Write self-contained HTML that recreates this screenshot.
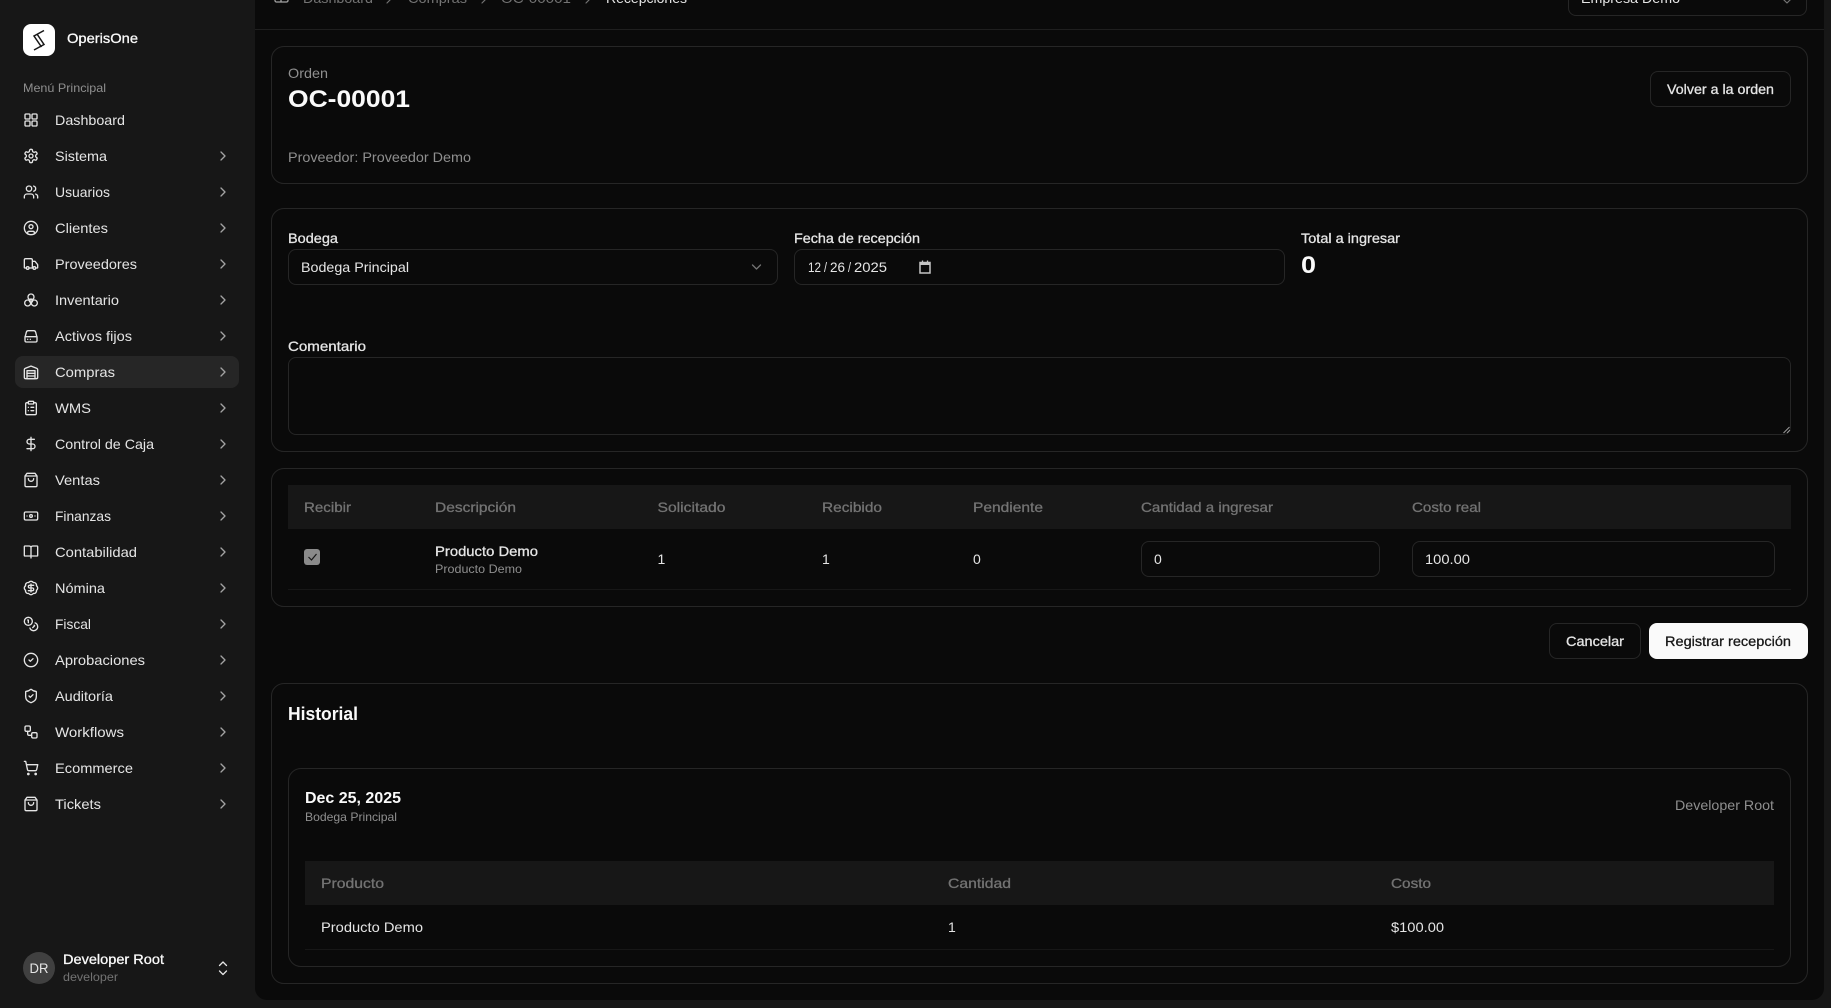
<!DOCTYPE html>
<html lang="es"><head><meta charset="utf-8"><title>OperisOne - Recepciones</title>
<style>
html,body{margin:0;padding:0;width:1831px;height:1008px;overflow:hidden;background:#171717}
.b{position:absolute;box-sizing:border-box}
#main{left:255px;top:-40px;width:1569px;height:1040px;background:#0a0a0a;border-radius:12px}
.card{border:1px solid #262626;border-radius:13px;background:#0a0a0a}
.in{border:1px solid #262626;border-radius:8px;background:#0a0a0a}
.th{background:#171717}
.hr{background:#171717;height:1px}
svg#o{position:absolute;left:0;top:0;font-family:"Liberation Sans",sans-serif;font-size:14px}
svg#o text{fill:#e5e5e5}
svg#o text.m{stroke:currentColor;stroke-width:.3px}
svg#o text.t{font-weight:700}
.i{fill:none;stroke:#e5e5e5;stroke-width:2;stroke-linecap:round;stroke-linejoin:round}
svg#o text.g{fill:#8f8f8f;color:#8f8f8f}
svg#o text.h{fill:#737373;color:#737373}
svg#o text.w{fill:#fafafa;color:#fafafa}
svg#o text.l{fill:#e5e5e5;color:#e5e5e5}
svg#o text.k{fill:#171717;color:#171717}
</style></head><body>
<aside class="b" style="left:0;top:0;width:255px;height:1008px">
<div class="b" style="left:23px;top:24px;width:32px;height:32px;background:#fff;border-radius:8px"></div>
<div class="b" style="left:15px;top:356px;width:224px;height:32px;background:#262626;border-radius:8px"></div>
<div class="b" style="left:23px;top:952px;width:32px;height:32px;background:#404040;border-radius:50%"></div>
</aside>
<main class="b" id="main"></main>
<div class="b" style="left:255px;top:29px;width:1569px;height:1px;background:#1f1f1f"></div>
<div class="b in" style="left:1568px;top:-30px;width:239px;height:46px"></div>
<div class="b card" style="left:271px;top:46px;width:1537px;height:138px"></div>
<div class="b in" style="left:1650px;top:71px;width:141px;height:36px"></div>
<div class="b card" style="left:271px;top:208px;width:1537px;height:244px"></div>
<div class="b in" style="left:288px;top:249px;width:490px;height:36px"></div>
<div class="b in" style="left:794px;top:249px;width:491px;height:36px"></div>
<div class="b in" style="left:288px;top:357px;width:1503px;height:78px"></div>
<div class="b card" style="left:271px;top:468px;width:1537px;height:139px"></div>
<div class="b th" style="left:288px;top:485px;width:1503px;height:44px"></div>
<div class="b hr" style="left:288px;top:589px;width:1503px"></div>
<div class="b" style="left:304px;top:549px;width:16px;height:16px;background:#8a8a8a;border-radius:3px"></div>
<div class="b in" style="left:1141px;top:541px;width:239px;height:36px"></div>
<div class="b in" style="left:1412px;top:541px;width:363px;height:36px"></div>
<div class="b in" style="left:1549px;top:623px;width:92px;height:36px"></div>
<div class="b" style="left:1649px;top:623px;width:159px;height:36px;background:#fafafa;border-radius:8px"></div>
<div class="b card" style="left:271px;top:683px;width:1537px;height:301px"></div>
<div class="b card" style="left:288px;top:768px;width:1503px;height:199px"></div>
<div class="b th" style="left:305px;top:861px;width:1469px;height:44px"></div>
<div class="b hr" style="left:305px;top:949px;width:1469px"></div>

<svg id="o" width="1831" height="1008" viewBox="0 0 1831 1008" xmlns="http://www.w3.org/2000/svg">
<defs><path id="c" d="m9 18 6-6-6-6"/>
<path id="bag" d="M6 2 3 6v14a2 2 0 0 0 2 2h14a2 2 0 0 0 2-2V6l-3-4ZM3 6h18M16 10a4 4 0 0 1-8 0"/></defs>
<!-- logo -->
<path d="M44 30.500 L34 36 L41.500 47 M34 50 L44 44.500 L37 34" fill="none" stroke="#171717" stroke-width="1.500" stroke-linejoin="miter"/>
<text class="w m" x="67" y="43" font-size="14" textLength="71" lengthAdjust="spacingAndGlyphs">OperisOne</text>
<text class="g" x="23" y="92" font-size="12" textLength="83" lengthAdjust="spacingAndGlyphs">Menú Principal</text>
<!-- nav text -->
<text x="55" y="125" textLength="70" lengthAdjust="spacingAndGlyphs">Dashboard</text>
<text x="55" y="161" textLength="52" lengthAdjust="spacingAndGlyphs">Sistema</text>
<text x="55" y="197" textLength="55" lengthAdjust="spacingAndGlyphs">Usuarios</text>
<text x="55" y="233" textLength="53" lengthAdjust="spacingAndGlyphs">Clientes</text>
<text x="55" y="269" textLength="82" lengthAdjust="spacingAndGlyphs">Proveedores</text>
<text x="55" y="305" textLength="64" lengthAdjust="spacingAndGlyphs">Inventario</text>
<text x="55" y="341" textLength="77" lengthAdjust="spacingAndGlyphs">Activos fijos</text>
<text x="55" y="377" textLength="60" lengthAdjust="spacingAndGlyphs">Compras</text>
<text x="55" y="413" textLength="36" lengthAdjust="spacingAndGlyphs">WMS</text>
<text x="55" y="449" textLength="99" lengthAdjust="spacingAndGlyphs">Control de Caja</text>
<text x="55" y="485" textLength="45" lengthAdjust="spacingAndGlyphs">Ventas</text>
<text x="55" y="521" textLength="56" lengthAdjust="spacingAndGlyphs">Finanzas</text>
<text x="55" y="557" textLength="82" lengthAdjust="spacingAndGlyphs">Contabilidad</text>
<text x="55" y="593" textLength="50" lengthAdjust="spacingAndGlyphs">Nómina</text>
<text x="55" y="629" textLength="36" lengthAdjust="spacingAndGlyphs">Fiscal</text>
<text x="55" y="665" textLength="90" lengthAdjust="spacingAndGlyphs">Aprobaciones</text>
<text x="55" y="701" textLength="58" lengthAdjust="spacingAndGlyphs">Auditoría</text>
<text x="55" y="737" textLength="69" lengthAdjust="spacingAndGlyphs">Workflows</text>
<text x="55" y="773" textLength="78" lengthAdjust="spacingAndGlyphs">Ecommerce</text>
<text x="55" y="809" textLength="46" lengthAdjust="spacingAndGlyphs">Tickets</text>
<!-- nav icons -->
<g class="i">
<g transform="translate(23,112) scale(.667)"><rect x="3" y="3" width="7.500" height="7.500" rx="1.500"/><rect x="13.500" y="3" width="7.500" height="7.500" rx="1.500"/><rect x="3" y="13.500" width="7.500" height="7.500" rx="1.500"/><rect x="13.500" y="13.500" width="7.500" height="7.500" rx="1.500"/></g>
<g transform="translate(23,148) scale(.667)"><path d="M12.220 2h-.44a2 2 0 0 0-2 2v.18a2 2 0 0 1-1 1.730l-.43.25a2 2 0 0 1-2 0l-.15-.08a2 2 0 0 0-2.730.73l-.22.38a2 2 0 0 0 .73 2.730l.15.1a2 2 0 0 1 1 1.720v.51a2 2 0 0 1-1 1.740l-.15.09a2 2 0 0 0-.73 2.730l.22.38a2 2 0 0 0 2.730.73l.15-.08a2 2 0 0 1 2 0l.43.25a2 2 0 0 1 1 1.730V20a2 2 0 0 0 2 2h.44a2 2 0 0 0 2-2v-.18a2 2 0 0 1 1-1.730l.43-.25a2 2 0 0 1 2 0l.15.08a2 2 0 0 0 2.730-.73l.22-.39a2 2 0 0 0-.73-2.730l-.15-.08a2 2 0 0 1-1-1.740v-.5a2 2 0 0 1 1-1.740l.15-.09a2 2 0 0 0 .73-2.730l-.22-.38a2 2 0 0 0-2.730-.73l-.15.08a2 2 0 0 1-2 0l-.43-.25a2 2 0 0 1-1-1.730V4a2 2 0 0 0-2-2z"/><circle cx="12" cy="12" r="3"/></g>
<g transform="translate(23,184) scale(.667)"><path d="M16 21v-2a4 4 0 0 0-4-4H6a4 4 0 0 0-4 4v2M22 21v-2a4 4 0 0 0-3-3.870M16 3.130a4 4 0 0 1 0 7.750"/><circle cx="9" cy="7" r="4"/></g>
<g transform="translate(23,220) scale(.667)"><circle cx="12" cy="12" r="10"/><circle cx="12" cy="10" r="3"/><path d="M7 20.662V19a2 2 0 0 1 2-2h6a2 2 0 0 1 2 2v1.662"/></g>
<g transform="translate(23,256) scale(.667)"><path d="M14 18V6a2 2 0 0 0-2-2H4a2 2 0 0 0-2 2v11a1 1 0 0 0 1 1h2M15 18H9M19 18h2a1 1 0 0 0 1-1v-3.650a1 1 0 0 0-.22-.624l-3.480-4.350A1 1 0 0 0 17.520 8H14"/><circle cx="17" cy="18" r="2"/><circle cx="7" cy="18" r="2"/></g>
<g transform="translate(23,292) scale(.667)"><circle cx="12" cy="7.500" r="4.500"/><circle cx="7" cy="16.500" r="4.500"/><circle cx="17" cy="16.500" r="4.500"/><circle cx="12" cy="13" r="2.500"/></g>
<g transform="translate(23,328) scale(.667)"><path d="M3 14 5 6.500a3 3 0 0 1 3-2.500h8a3 3 0 0 1 3 2.500l2 7.500v5a2 2 0 0 1-2 2H5a2 2 0 0 1-2-2zM3 13h18M7 17h.01M11 17h.01"/></g>
<g transform="translate(23,364) scale(.667)"><path d="M22 8.350V20a2 2 0 0 1-2 2H4a2 2 0 0 1-2-2V8.350A2 2 0 0 1 3.260 6.500l8-3.200a2 2 0 0 1 1.480 0l8 3.200A2 2 0 0 1 22 8.350ZM6 18h12M6 14h12"/><rect x="6" y="10" width="12" height="12"/></g>
<g transform="translate(23,400) scale(.667)"><rect x="8" y="2" width="8" height="4" rx="1"/><path d="M16 4h2a2 2 0 0 1 2 2v14a2 2 0 0 1-2 2H6a2 2 0 0 1-2-2V6a2 2 0 0 1 2-2h2M12 11h4M12 16h4M8 11h.01M8 16h.01"/></g>
<g transform="translate(23,436) scale(.667)"><path d="M12 2v20M17 5H9.500a3.500 3.500 0 0 0 0 7h5a3.500 3.500 0 0 1 0 7H6"/></g>
<use href="#bag" transform="translate(23,472) scale(.667)"/>
<g transform="translate(23,508) scale(.667)"><rect x="2" y="6" width="20" height="12" rx="2"/><circle cx="12" cy="12" r="2"/><path d="M6 12h.01M18 12h.01"/></g>
<g transform="translate(23,544) scale(.667)"><path d="M12 5v16M3 18a1 1 0 0 1-1-1V4a1 1 0 0 1 1-1h6a3 3 0 0 1 3 2 3 3 0 0 1 3-2h6a1 1 0 0 1 1 1v13a1 1 0 0 1-1 1h-9z"/></g>
<g transform="translate(23,580) scale(.667)"><path d="M3.850 8.620a4 4 0 0 1 4.780-4.770 4 4 0 0 1 6.740 0 4 4 0 0 1 4.780 4.780 4 4 0 0 1 0 6.740 4 4 0 0 1-4.770 4.780 4 4 0 0 1-6.750 0 4 4 0 0 1-4.780-4.770 4 4 0 0 1 0-6.760ZM16 8h-6a2 2 0 1 0 0 4h4a2 2 0 1 1 0 4H8M12 18V6"/></g>
<g transform="translate(23,616) scale(.667)"><circle cx="8" cy="8" r="6"/><path d="M18.090 10.370A6 6 0 1 1 10.340 18M7 6h1v4M16.710 13.880l.7.710-2.820 2.820"/></g>
<g transform="translate(23,652) scale(.667)"><circle cx="12" cy="12" r="10"/><path d="m9 12 2 2 4-4"/></g>
<g transform="translate(23,688) scale(.667)"><path d="M20 13c0 5-3.500 7.500-7.660 8.950a1 1 0 0 1-.67-.01C7.500 20.500 4 18 4 13V6a1 1 0 0 1 1-1c2 0 4.500-1.200 6.240-2.720a1.170 1.170 0 0 1 1.520 0C14.510 3.810 17 5 19 5a1 1 0 0 1 1 1zM9 12l2 2 4-4"/></g>
<g transform="translate(23,724) scale(.667)"><rect x="3" y="3" width="8" height="8" rx="2"/><path d="M7 11v4a2 2 0 0 0 2 2h4"/><rect x="13" y="13" width="8" height="8" rx="2"/></g>
<g transform="translate(23,760) scale(.667)"><circle cx="8" cy="21" r="1"/><circle cx="19" cy="21" r="1"/><path d="M2.050 2.050h2l2.660 12.420a2 2 0 0 0 2 1.580h9.780a2 2 0 0 0 1.950-1.570l1.650-7.430H5.120"/></g>
<use href="#bag" transform="translate(23,796) scale(.667)"/>
</g>
<!-- nav chevrons -->
<g class="i" style="stroke:#a3a3a3">
<use href="#c" transform="translate(215,148) scale(.667)"/><use href="#c" transform="translate(215,184) scale(.667)"/><use href="#c" transform="translate(215,220) scale(.667)"/><use href="#c" transform="translate(215,256) scale(.667)"/><use href="#c" transform="translate(215,292) scale(.667)"/><use href="#c" transform="translate(215,328) scale(.667)"/><use href="#c" transform="translate(215,364) scale(.667)"/><use href="#c" transform="translate(215,400) scale(.667)"/><use href="#c" transform="translate(215,436) scale(.667)"/><use href="#c" transform="translate(215,472) scale(.667)"/><use href="#c" transform="translate(215,508) scale(.667)"/><use href="#c" transform="translate(215,544) scale(.667)"/><use href="#c" transform="translate(215,580) scale(.667)"/><use href="#c" transform="translate(215,616) scale(.667)"/><use href="#c" transform="translate(215,652) scale(.667)"/><use href="#c" transform="translate(215,688) scale(.667)"/><use href="#c" transform="translate(215,724) scale(.667)"/><use href="#c" transform="translate(215,760) scale(.667)"/><use href="#c" transform="translate(215,796) scale(.667)"/>
</g>
<!-- user -->
<text x="29.500" y="973" font-size="14" textLength="19" lengthAdjust="spacingAndGlyphs">DR</text>
<text class="w m" x="63" y="964" font-size="14" textLength="101" lengthAdjust="spacingAndGlyphs">Developer Root</text>
<text class="h" x="63" y="981" font-size="12" textLength="55" lengthAdjust="spacingAndGlyphs">developer</text>
<path class="i" style="stroke-width:1.300" d="M219.500 965.500l3.500-3.500 3.500 3.500M219.500 971l3.500 3.500 3.500-3.500"/>
<!-- breadcrumb -->
<path class="i" style="stroke:#a3a3a3;stroke-width:1.300" d="M275-4v4.500a1.500 1.500 0 0 0 1.500 1.500h10a1.500 1.500 0 0 0 1.500-1.500V-4M281-4v6"/>
<text class="h" x="303" y="3" textLength="70" lengthAdjust="spacingAndGlyphs">Dashboard</text>
<text class="h" x="408" y="3" textLength="59" lengthAdjust="spacingAndGlyphs">Compras</text>
<text class="h" x="501" y="3" textLength="70" lengthAdjust="spacingAndGlyphs">OC-00001</text>
<text class="l" x="606" y="3" textLength="81" lengthAdjust="spacingAndGlyphs">Recepciones</text>
<g class="i" style="stroke:#737373;stroke-width:1.200"><path d="M387 -3l3 3-3 3M482 -3l3 3-3 3M586 -3l3 3-3 3"/></g>
<text class="l" x="1581" y="3" textLength="99" lengthAdjust="spacingAndGlyphs">Empresa Demo</text>
<path class="i" style="stroke:#737373;stroke-width:1.200" d="M1783-1l4 4 4-4"/>
<!-- card 1 -->
<text class="g" x="288" y="78" textLength="40" lengthAdjust="spacingAndGlyphs">Orden</text>
<text class="w t" x="288" y="107" font-size="24" textLength="122" lengthAdjust="spacingAndGlyphs">OC-00001</text>
<text class="g" x="288" y="162" textLength="183" lengthAdjust="spacingAndGlyphs">Proveedor: Proveedor Demo</text>
<text class="l m" x="1667" y="94" textLength="107" lengthAdjust="spacingAndGlyphs">Volver a la orden</text>
<!-- card 2 -->
<text class="l m" x="288" y="243" textLength="50" lengthAdjust="spacingAndGlyphs">Bodega</text>
<text class="l" x="301" y="272" textLength="108" lengthAdjust="spacingAndGlyphs">Bodega Principal</text>
<path class="i" style="stroke:#737373;stroke-width:1.300" d="M752.500 265l4 4 4-4"/>
<text class="l m" x="794" y="243" textLength="126" lengthAdjust="spacingAndGlyphs">Fecha de recepción</text>
<text class="l" x="808" y="272" textLength="13" lengthAdjust="spacingAndGlyphs">12</text>
<text class="l" x="824" y="272" textLength="3" lengthAdjust="spacingAndGlyphs">/</text>
<text class="l" x="830" y="272" textLength="15" lengthAdjust="spacingAndGlyphs">26</text>
<text class="l" x="848" y="272" textLength="3" lengthAdjust="spacingAndGlyphs">/</text>
<text class="l" x="854" y="272" textLength="33" lengthAdjust="spacingAndGlyphs">2025</text>
<g fill="none" stroke="#c4c4c4"><rect x="920" y="262.500" width="10" height="10.500" stroke-width="1.500"/><path d="M919.500 263.500h11" stroke-width="3"/><path d="M922.500 260.500v2M927.500 260.500v2" stroke-width="1.300"/></g>
<text class="l m" x="1301" y="243" textLength="99" lengthAdjust="spacingAndGlyphs">Total a ingresar</text>
<text class="w t" x="1301" y="273" font-size="24" textLength="15" lengthAdjust="spacingAndGlyphs">0</text>
<text class="l m" x="288" y="351" textLength="78" lengthAdjust="spacingAndGlyphs">Comentario</text>
<path d="M1783.500 433l6-6M1787 433l3-3" stroke="#9a9a9a" stroke-width="1" fill="none"/>
<!-- table -->
<text class="h m" x="304" y="512" textLength="47" lengthAdjust="spacingAndGlyphs">Recibir</text>
<text class="h m" x="435" y="512" textLength="81" lengthAdjust="spacingAndGlyphs">Descripción</text>
<text class="h m" x="657.500" y="512" textLength="68" lengthAdjust="spacingAndGlyphs">Solicitado</text>
<text class="h m" x="822" y="512" textLength="60" lengthAdjust="spacingAndGlyphs">Recibido</text>
<text class="h m" x="973" y="512" textLength="70" lengthAdjust="spacingAndGlyphs">Pendiente</text>
<text class="h m" x="1141" y="512" textLength="132" lengthAdjust="spacingAndGlyphs">Cantidad a ingresar</text>
<text class="h m" x="1412" y="512" textLength="69" lengthAdjust="spacingAndGlyphs">Costo real</text>
<path d="M308.500 557l3 3 5-6" fill="none" stroke="#171717" stroke-width="1.200"/>
<text class="l m" x="435" y="556" textLength="103" lengthAdjust="spacingAndGlyphs">Producto Demo</text>
<text class="g" x="435" y="573" font-size="12" textLength="87" lengthAdjust="spacingAndGlyphs">Producto Demo</text>
<text class="l" x="657.500" y="564">1</text>
<text class="l" x="822" y="564">1</text>
<text class="l" x="973" y="564">0</text>
<text class="l" x="1154" y="564">0</text>
<text class="l" x="1425" y="564" textLength="45" lengthAdjust="spacingAndGlyphs">100.00</text>
<text class="l m" x="1566" y="646" textLength="58" lengthAdjust="spacingAndGlyphs">Cancelar</text>
<text class="k m" x="1665" y="646" textLength="126" lengthAdjust="spacingAndGlyphs">Registrar recepción</text>
<!-- history -->
<text class="w t" x="288" y="720" font-size="18" textLength="70" lengthAdjust="spacingAndGlyphs">Historial</text>
<text class="w t" x="305" y="803" font-size="16" textLength="96" lengthAdjust="spacingAndGlyphs">Dec 25, 2025</text>
<text class="g" x="305" y="821" font-size="12" textLength="92" lengthAdjust="spacingAndGlyphs">Bodega Principal</text>
<text class="g" x="1675" y="810" textLength="99" lengthAdjust="spacingAndGlyphs">Developer Root</text>
<text class="h m" x="321" y="888" textLength="63" lengthAdjust="spacingAndGlyphs">Producto</text>
<text class="h m" x="948" y="888" textLength="63" lengthAdjust="spacingAndGlyphs">Cantidad</text>
<text class="h m" x="1391" y="888" textLength="40" lengthAdjust="spacingAndGlyphs">Costo</text>
<text class="l" x="321" y="932" textLength="102" lengthAdjust="spacingAndGlyphs">Producto Demo</text>
<text class="l" x="948" y="932">1</text>
<text class="l" x="1391" y="932" textLength="53" lengthAdjust="spacingAndGlyphs">$100.00</text>
</svg>
</body></html>
